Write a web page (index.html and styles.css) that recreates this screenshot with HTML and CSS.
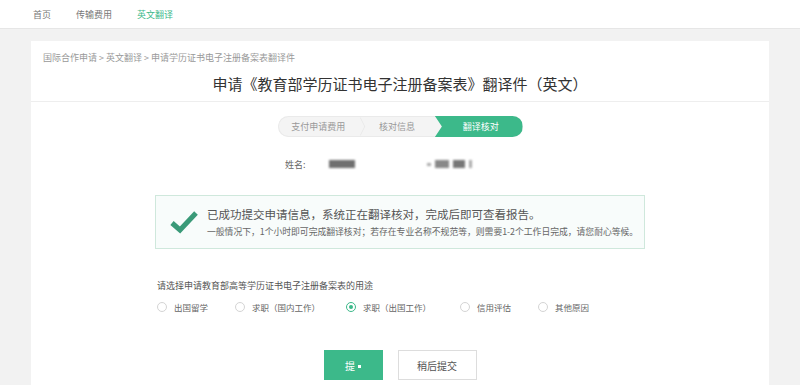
FILE: index.html
```html
<!DOCTYPE html>
<html lang="zh-CN">
<head>
  <meta charset="UTF-8" />
  <title>英文翻译</title>
  <link rel="stylesheet" href="styles.css">
</head>
<body>

  <!-- Top nav -->
  <header class="top-nav">
    <a href="#" class="nav-link">首页</a>
    <a href="#" class="nav-link">传输费用</a>
    <a href="#" class="nav-link active">英文翻译</a>
  </header>

  <main class="card">
    <div class="card-head">
      <div class="crumbs">国际合作申请 &gt; 英文翻译 &gt; 申请学历证书电子注册备案表翻译件</div>
      <h1 class="title">申请《教育部学历证书电子注册备案表》翻译件（英文）</h1>
    </div>

    <div class="card-body">
      <!-- Steps -->
      <div class="steps">
        <div class="step s1">支付申请费用</div>
        <div class="step s2">核对信息</div>
        <div class="step s3 current">翻译核对</div>
      </div>

      <div class="name-row">
        <span class="label">姓名:</span>
        <span class="blur b1"></span>
        <span class="blur-group">
          <span class="blur b2"></span>
          <span class="blur b3"></span>
          <span class="blur b4"></span>
          <span class="blur b5"></span>
        </span>
      </div>

      <!-- Success notice -->
      <div class="notice">
        <svg class="check" width="28" height="24" viewBox="0 0 28 24">
          <path d="M2 13 L10 20 L26 3" fill="none" stroke="#3a9a78" stroke-width="5"/>
        </svg>
        <div class="notice-text">
          <p class="notice-main">已成功提交申请信息，系统正在翻译核对，完成后即可查看报告。</p>
          <p class="notice-sub">一般情况下，1个小时即可完成翻译核对；若存在专业名称不规范等，则需要1-2个工作日完成，请您耐心等候。</p>
        </div>
      </div>

      <div class="purpose">
        <p class="question">请选择申请教育部高等学历证书电子注册备案表的用途</p>
        <div class="options">
          <label class="opt o1"><span class="radio"></span>出国留学</label>
          <label class="opt o2"><span class="radio"></span>求职（国内工作）</label>
          <label class="opt o3"><span class="radio on"></span>求职（出国工作）</label>
          <label class="opt o4"><span class="radio"></span>信用评估</label>
          <label class="opt"><span class="radio"></span>其他原因</label>
        </div>
      </div>

      <div class="actions">
        <button class="btn primary">提<span class="dot"></span></button>
        <button class="btn">稍后提交</button>
      </div>
    </div>
  </main>

</body>
</html>
```
FILE: styles.css
```css
body {
  margin: 0;
  background: #f2f2f2;
  font-family: "Noto Sans CJK SC", "Noto Sans", sans-serif;
  color: #555;
  height: 385px;
  overflow: hidden;
}

p {
  margin: 0;
}

/* Top navigation */
.top-nav {
  background: #fff;
  height: 28px;
  display: flex;
  align-items: center;
  padding-left: 33px;
  gap: 25px;
  border-bottom: 1px solid #e6e6e6;
}

.nav-link {
  font-size: 9px;
  color: #777;
  text-decoration: none;
}

.nav-link.active {
  color: #3cb98a;
}

/* Main card */
.card {
  background: #fff;
  margin: 12px 31px 0 31px;
  height: 344px;
}

.card-head {
  height: 50px;
  border-bottom: 1px solid #eee;
  padding: 10px 12px 0;
}

.crumbs {
  font-size: 9px;
  color: #999;
  line-height: 14px;
}

.title {
  margin: 8px 0 0;
  text-align: center;
  font-size: 15px;
  font-weight: normal;
  color: #333;
  line-height: 22px;
}

.card-body {
  padding-top: 14px;
}

/* Steps */
.steps {
  width: 245px;
  height: 21px;
  margin: 0 auto;
  display: flex;
  border-radius: 11px;
  overflow: hidden;
  background: #f4f4f4;
  box-shadow: inset 0 0 0 1px #eaeaea;
}

.step {
  font-size: 9px;
  line-height: 21px;
  text-align: center;
  color: #999;
  position: relative;
}

.s1 { width: 83px; }
.s2 { width: 77px; }
.s3 { width: 85px; }

/* faint chevron between the first two steps */
.s2::before {
  content: "";
  position: absolute;
  left: -5px;
  top: 4px;
  width: 12px;
  height: 12px;
  border-top: 1px solid #e6e6e6;
  border-right: 1px solid #e6e6e6;
  transform: scaleX(0.5) rotate(45deg);
}

.step.current {
  background: #3cb98a;
  color: #fff;
  clip-path: polygon(0 0, 100% 0, 100% 100%, 0 100%, 7px 50%);
  padding-left: 4px;
}

/* Name row */
.name-row {
  display: flex;
  align-items: center;
  height: 14px;
  margin: 20px 0 0 254px;
  font-size: 9px;
  color: #666;
}

.label {
  width: 44px;
}

.blur {
  display: inline-block;
  height: 8px;
  background: #6f6f6f;
  filter: blur(0.8px);
}

.b1 { width: 26px; }

.blur-group {
  display: flex;
  gap: 4px;
  margin-left: 72px;
  align-items: center;
}

.b2 { width: 4px; height: 3px; background: #aaa; }
.b3 { width: 14px; background: #888; }
.b4 { width: 12px; background: #777; }
.b5 { width: 3px; background: #aaa; }

/* Notice */
.notice {
  width: 490px;
  height: 54px;
  margin: 24px auto 0 124px;
  border: 1px solid #cfe8dc;
  background: #f8fcfb;
  display: flex;
  align-items: center;
  box-sizing: border-box;
}

.check {
  margin: 0 9px 0 14px;
}

.notice-main {
  font-size: 11.5px;
  color: #555;
  line-height: 17px;
}

.notice-sub {
  font-size: 8.8px;
  color: #666;
  line-height: 12px;
  margin-top: 3px;
}

/* Purpose */
.purpose {
  margin: 30px 0 0 126px;
}

.question {
  font-size: 9px;
  color: #555;
  line-height: 14px;
}

.options {
  display: flex;
  margin-top: 7px;
}

.opt {
  display: flex;
  align-items: center;
  font-size: 8.5px;
  color: #666;
  line-height: 14px;
}

.o1 { width: 78px; }
.o2 { width: 111px; }
.o3 { width: 114px; }
.o4 { width: 78px; }

.radio {
  width: 8px;
  height: 8px;
  border: 1px solid #d4d4d4;
  border-radius: 50%;
  margin-right: 7px;
  position: relative;
}

.radio.on {
  border-color: #3cb98a;
}

.radio.on::after {
  content: "";
  position: absolute;
  left: 2px;
  top: 2px;
  width: 4px;
  height: 4px;
  border-radius: 50%;
  background: #3cb98a;
}

/* Buttons */
.actions {
  display: flex;
  justify-content: center;
  gap: 15px;
  margin-top: 36px;
}

.btn {
  width: 79px;
  height: 30px;
  border: 1px solid #ddd;
  background: #fff;
  font-family: inherit;
  font-size: 10px;
  color: #555;
}

.btn.primary {
  width: 59px;
  background: #3cb98a;
  border-color: #3cb98a;
  color: #fff;
}

.dot {
  display: inline-block;
  width: 3px;
  height: 3px;
  background: #fff;
  margin-left: 3px;
  vertical-align: middle;
}
```
